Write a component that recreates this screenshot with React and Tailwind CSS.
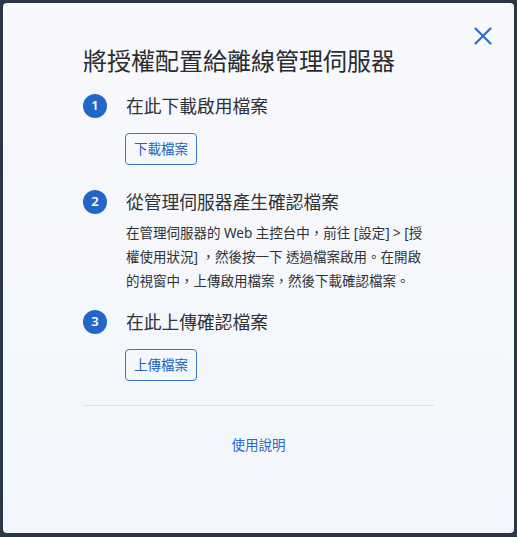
import React from 'react';

const FONT = { fontFamily: '"Noto Sans", "Noto Sans CJK TC", sans-serif' };

const StepBadge = ({ n }) => (
  <span className="w-6 h-6 rounded-full bg-[#2466c6] text-white text-[13px] font-semibold flex items-center justify-center shrink-0">
    {n}
  </span>
);

const StepTitle = ({ n, children, className = '' }) => (
  <div className={`flex items-center h-6 ${className}`}>
    <StepBadge n={n} />
    <span className="ml-[19px] text-[17.75px] leading-6 text-[#2f3237]">{children}</span>
  </div>
);

const OutlineButton = ({ children, className = '' }) => (
  <button className={`ml-[42px] h-8 w-[72px] rounded-[4px] border border-[#3a78cf] text-[13.5px] text-[#2462bd] bg-transparent ${className}`}>
    {children}
  </button>
);

export default function App() {
  return (
    <div lang="zh-Hant" className="w-[517px] h-[537px] bg-[#2b3647] pt-[3px] px-[3px] pb-[4px]" style={FONT}>
      <div className="relative h-full rounded-[4px] bg-gradient-to-b from-[#f8f9fb] to-[#f2f6fc] pt-[42px] px-[80px]">
        <button className="absolute top-[24px] right-[22px] w-[18px] h-[18px] text-[#2d6dcc]">
          <svg viewBox="0 0 18 18" width="18" height="18" fill="none" stroke="currentColor" strokeWidth="2.2" strokeLinecap="round">
            <path d="M1.5 1.5L16.5 16.5M16.5 1.5L1.5 16.5" />
          </svg>
        </button>

        <h2 className="text-[24px] leading-8 text-[#2a2c30] font-normal">將授權配置給離線管理伺服器</h2>

        <StepTitle n={1} className="mt-[17px]">在此下載啟用檔案</StepTitle>
        <OutlineButton className="mt-[15px]">下載檔案</OutlineButton>

        <StepTitle n={2} className="mt-[25px]">從管理伺服器產生確認檔案</StepTitle>
        <p className="mt-[7px] ml-[43px] text-[13.5px] leading-6 text-[#2f3237]">
          在管理伺服器的 Web 主控台中，前往 [設定] &gt; [授權使用狀況] ，然後按一下 透過檔案啟用。在開啟的視窗中，上傳啟用檔案，然後下載確認檔案。
        </p>

        <StepTitle n={3} className="mt-[17px]">在此上傳確認檔案</StepTitle>
        <OutlineButton className="mt-[15px]">上傳檔案</OutlineButton>

        <div className="mt-6 h-px bg-[#dbe2ec]" />

        <div className="mt-[26px] text-center">
          <a className="text-[13.5px] leading-5 text-[#2a67c4]">使用說明</a>
        </div>
      </div>
    </div>
  );
}
